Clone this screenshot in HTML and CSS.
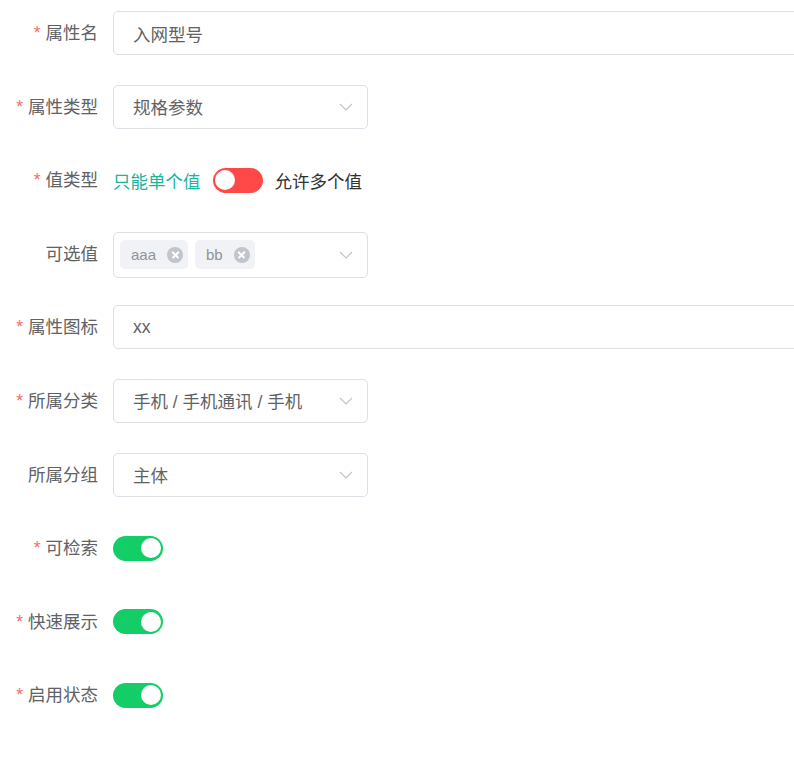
FILE: index.html
```html
<!DOCTYPE html>
<html lang="zh-CN">
<head>
    <meta charset="UTF-8">
    <title>属性编辑</title>
    <link rel="stylesheet" href="styles.css">
</head>
<body>
    <form class="attr-form">
        <div class="form-item">
            <label class="form-label required">属性名</label>
            <div class="form-content">
                <div class="input input-wide">入网型号</div>
            </div>
        </div>

        <div class="form-item">
            <label class="form-label required">属性类型</label>
            <div class="form-content">
                <div class="input select">
                    <span>规格参数</span>
                    <svg class="arrow" width="14" height="8" viewBox="0 0 14 8"><path d="M1 1l6 6 6-6" fill="none" stroke="#c0c4cc" stroke-width="1.2"/></svg>
                </div>
            </div>
        </div>

        <div class="form-item">
            <label class="form-label required">值类型</label>
            <div class="form-content">
                <span class="switch-text active">只能单个值</span>
                <span class="switch switch-red"><span class="knob"></span></span>
                <span class="switch-text">允许多个值</span>
            </div>
        </div>

        <div class="form-item">
            <label class="form-label">可选值</label>
            <div class="form-content">
                <div class="input select multi">
                    <div class="tags">
                        <span class="tag">aaa<i class="tag-close"></i></span>
                        <span class="tag">bb<i class="tag-close"></i></span>
                    </div>
                    <svg class="arrow" width="14" height="8" viewBox="0 0 14 8"><path d="M1 1l6 6 6-6" fill="none" stroke="#c0c4cc" stroke-width="1.2"/></svg>
                </div>
            </div>
        </div>

        <div class="form-item">
            <label class="form-label required">属性图标</label>
            <div class="form-content">
                <div class="input input-wide">xx</div>
            </div>
        </div>

        <div class="form-item">
            <label class="form-label required">所属分类</label>
            <div class="form-content">
                <div class="input select">
                    <span>手机 / 手机通讯 / 手机</span>
                    <svg class="arrow" width="14" height="8" viewBox="0 0 14 8"><path d="M1 1l6 6 6-6" fill="none" stroke="#c0c4cc" stroke-width="1.2"/></svg>
                </div>
            </div>
        </div>

        <div class="form-item">
            <label class="form-label">所属分组</label>
            <div class="form-content">
                <div class="input select">
                    <span>主体</span>
                    <svg class="arrow" width="14" height="8" viewBox="0 0 14 8"><path d="M1 1l6 6 6-6" fill="none" stroke="#c0c4cc" stroke-width="1.2"/></svg>
                </div>
            </div>
        </div>

        <div class="form-item">
            <label class="form-label required">可检索</label>
            <div class="form-content">
                <span class="switch switch-on"><span class="knob"></span></span>
            </div>
        </div>

        <div class="form-item">
            <label class="form-label required">快速展示</label>
            <div class="form-content">
                <span class="switch switch-on"><span class="knob"></span></span>
            </div>
        </div>

        <div class="form-item">
            <label class="form-label required">启用状态</label>
            <div class="form-content">
                <span class="switch switch-on"><span class="knob"></span></span>
            </div>
        </div>
    </form>
</body>
</html>
```

FILE: styles.css
```css
html, body {
    overflow: hidden;
}

body {
    margin: 0;
    padding: 11px 0 0;
    background: #fff;
    font-family: 'Liberation Sans', 'Noto Sans CJK SC', sans-serif;
    font-size: 17.5px;
    color: #606266;
}

.attr-form {
    width: 794px;
    overflow: hidden;
}

.form-item {
    display: flex;
    height: 44px;
    margin-bottom: 29.6px;
}

.form-label {
    width: 113px;
    flex-shrink: 0;
    padding-right: 15px;
    box-sizing: border-box;
    text-align: right;
    line-height: 44px;
    color: #606266;
}

.form-label.required::before {
    content: '*';
    color: #f56c6c;
    margin-right: 5px;
}

.form-content {
    display: flex;
    align-items: center;
    flex: 1;
    min-width: 0;
}

.input {
    height: 44px;
    box-sizing: border-box;
    border: 1px solid #dcdfe6;
    border-radius: 5px;
    padding: 0 19px;
    display: flex;
    align-items: center;
    flex-shrink: 0;
    color: #606266;
}

.input-wide {
    width: 760px;
}

.select {
    width: 255px;
    justify-content: space-between;
    padding-right: 14px;
}

.arrow {
    flex-shrink: 0;
}

.multi {
    height: 46px;
    padding-left: 6px;
    margin-top: 2px;
}

.tags {
    display: flex;
    gap: 7px;
}

.tag {
    display: inline-flex;
    align-items: center;
    height: 29px;
    padding: 0 5px 0 11px;
    background: #f0f2f5;
    border-radius: 5px;
    font-size: 15px;
    color: #909399;
}

.tag-close {
    position: relative;
    width: 16px;
    height: 16px;
    margin-left: 11px;
    border-radius: 50%;
    background: #c0c4cc;
}

.tag-close::before,
.tag-close::after {
    content: '';
    position: absolute;
    left: 3.5px;
    top: 7.25px;
    width: 9px;
    height: 1.5px;
    background: #fff;
    transform: rotate(45deg);
}

.tag-close::after {
    transform: rotate(-45deg);
}

.switch-text {
    color: #303133;
}

.switch-text.active {
    color: #1bb49e;
}

.switch {
    position: relative;
    display: inline-block;
    flex-shrink: 0;
    width: 50px;
    height: 25px;
    border-radius: 12.5px;
    background: #ff4949;
    margin: 0 12px;
}

.switch-on {
    background: #13ce66;
    margin: 0;
}

.knob {
    position: absolute;
    top: 2.5px;
    left: 2.5px;
    width: 20px;
    height: 20px;
    border-radius: 50%;
    background: #fff;
}

.switch-on .knob {
    left: 27.5px;
}
```
